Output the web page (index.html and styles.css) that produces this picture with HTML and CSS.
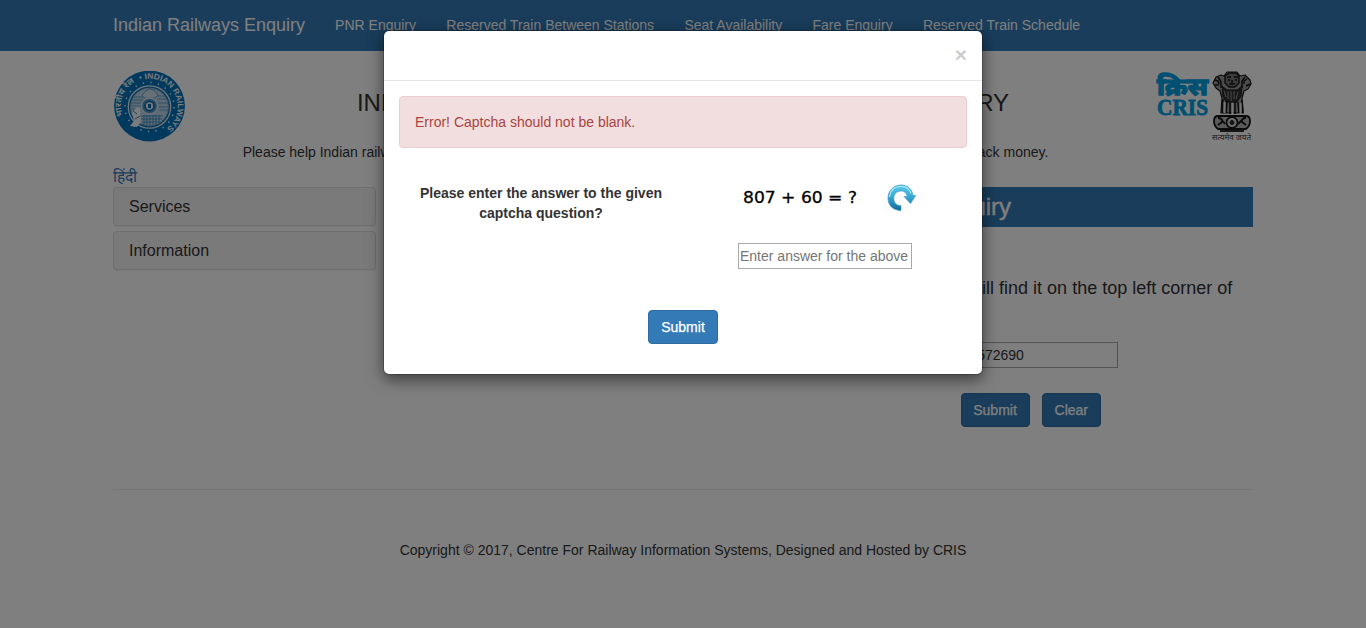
FILE: index.html
```html
<!DOCTYPE html>
<html lang="en">
<head>
<meta charset="utf-8">
<title>Indian Railways Enquiry</title>
<link rel="stylesheet" href="styles.css">
</head>
<body>
<nav class="navbar">
  <div class="container nav-row">
    <a class="brand">Indian Railways Enquiry</a>
    <a class="nav-link">PNR Enquiry</a>
    <a class="nav-link">Reserved Train Between Stations</a>
    <a class="nav-link">Seat Availability</a>
    <a class="nav-link">Fare Enquiry</a>
    <a class="nav-link">Reserved Train Schedule</a>
  </div>
</nav>
<div class="container">
  <header class="masthead">
    <svg class="rail-logo" width="74" height="72" viewBox="0 0 74 72">
      <defs>
        <path id="arc-en" d="M32 8.3A27.6 27.6 0 1 1 36 63"/>
        <path id="arc-hi" d="M10 45A27.500 27.500 0 0 1 32 7.600"/>
      </defs>
      <circle cx="36.500" cy="35" r="35.4" fill="#0072bc"/>
      <circle cx="36.500" cy="36" r="24.6" fill="none" stroke="#dcebf8" stroke-width="1.500" stroke-dasharray="1.500 6.230"/>
      <circle cx="36.500" cy="36" r="21.2" fill="#0c70b5" stroke="#e3edf5" stroke-width="1.300"/>
      <circle cx="36.500" cy="36" r="18.8" fill="#bcd6eb" stroke="#8ab9dd" stroke-width="1"/>
      <path d="M21 26h10M42 25h10M19 29h11M44 28h10M18 32h11M45 32h10M18 35h10M46 36h9M18 38h9M46 39h9" stroke="#5c9fce" stroke-width="1"/>
      <path d="M29 24l4-4 3-2 5 1 4 5-3 3H31z" fill="#cfe1ef" stroke="#4d95c8" stroke-width=".8"/>
      <circle cx="36.500" cy="35" r="8" fill="#5499cb" stroke="#dbe9f4" stroke-width="1.300"/>
      <circle cx="36.500" cy="35" r="4.500" fill="#e8f1f8" stroke="#0669ad" stroke-width="1.600"/>
      <path d="M35 33h3v4h-3z" fill="#0669ad"/>
      <path d="M25 45h25M27 48h22M29 51h18M31 44v10M34 44v11M37 44v11M40 44v11M43 44v10M46 44v7" stroke="#3d8dc4" stroke-width=".9"/>
      <path d="M19 42l5-6 3 1 1 14-4 5-7-1 4-5z" fill="#f3f7fa"/>
      <path d="M20 40l4 3M22 48l5-3" stroke="#3284c0" stroke-width="1"/>
      <text class="seal-text"><textPath href="#arc-en" textLength="74" lengthAdjust="spacingAndGlyphs">INDIAN RAILWAYS</textPath></text>
      <text class="seal-hindi"><textPath href="#arc-hi" textLength="39" lengthAdjust="spacingAndGlyphs">भारतीय रेल</textPath></text>
      <circle cx="27.500" cy="6.500" r="1.2" fill="#dcebf8"/>
    </svg>
    <h1 class="title">INDIAN RAILWAYS PASSENGER RESERVATION ENQUIRY</h1>
    <svg class="cris-logo" width="98" height="72" viewBox="0 0 98 72">
      <text class="cris-hindi" x="2" y="24" textLength="51" lengthAdjust="spacingAndGlyphs">क्रिस</text>
      <text class="cris-text" x="2" y="43.500" textLength="51" lengthAdjust="spacingAndGlyphs">CRIS</text>
      <g stroke="#151515" stroke-linejoin="round">
        <path d="M69 5l3-4h10l3 4 5-1 5 5 1 4-3 5-4 2-2 7 1 15H66l1-15-2-7-4-3-3-5 3-6 5-2z" fill="#999" stroke-width="1.200"/>
        <path d="M70 5l4-3h7l3 3v7l-4 4h-6l-4-4z" fill="#777" stroke-width="1.400"/>
        <path d="M72 6h4m3 0h4M73 9h2m5 0h2m-5 0v3m-3 1h6M60 9l3 1 1 3m-4 1l4 0m28-6l-3 2v3m6 0l-4 2M63 6l3 5v6m24-11l-3 4v7" fill="none" stroke-width="1.500"/>
        <path d="M67 15l5 4h10l5-4-1 10-4 6H71l-3-6z" fill="#333"/>
        <path d="M69 20l2 6m2-6v8m3-8v10m3-10v8m4-7l-2 7" stroke="#aaa" stroke-width=".8" fill="none"/>
        <path d="M68 28l-1 14m5-12l-1 12m4-11v12m5-12v12m3-12l1 11m3-13l1 13" fill="none" stroke-width="1.600"/>
        <path d="M69.500 31v11m8-10v11m8-11v11" stroke="#eee" stroke-width="1.900"/>
        <path d="M63 45h28q4 0 4 5t-4 8H63q-4-3-4-8t4-5z" fill="#b5b5b5" stroke-width="1.800"/>
        <path d="M63 47q5 0 4 4l-4 3m3-6l4 5m21-6q-5 0-4 4l4 3m-3-6l-5 5" fill="none" stroke-width="1.800"/>
        <circle cx="77" cy="51.500" r="5.500" fill="#ddd" stroke-width="1.800"/>
        <circle cx="77" cy="51.500" r="2" fill="#333"/>
        <path d="M65 60h24" stroke-width="1.800"/>
      </g>
      <text class="motto" x="57" y="69" textLength="39" lengthAdjust="spacingAndGlyphs">सत्यमेव जयते</text>
    </svg>
  </header>
  <p class="notice">Please help Indian railways and government of India in moving towards a digitized and cashless economy. Eradicate black money.</p>
  <div class="lang"><a>हिंदी</a></div>
  <div class="columns">
    <aside class="sidebar">
      <div class="panel">Services</div>
      <div class="panel">Information</div>
    </aside>
    <main class="content">
      <h2 class="banner">Passenger Current Status Enquiry</h2>
      <p class="lead">Enter the PNR for your booking below to get the current status. You will find it on the top left corner of the ticket.</p>
      <div class="pnr-row"><input class="field" type="text" value="2458572690"></div>
      <div class="actions"><button class="btn">Submit</button><button class="btn">Clear</button></div>
    </main>
  </div>
  <footer class="footer">Copyright © 2017, Centre For Railway Information Systems, Designed and Hosted by CRIS</footer>
</div>
<div class="backdrop">
  <section class="modal">
    <div class="modal-head"><span class="close">×</span></div>
    <div class="modal-body">
      <div class="alert">Error! Captcha should not be blank.</div>
      <div class="question">
        <label class="prompt">Please enter the answer to the given captcha question?</label>
        <div class="answer">
          <div class="captcha-row">
            <svg class="captcha" width="130" height="30" viewBox="0 0 130 30"><text class="captcha-text" x="5" y="20" textLength="114" lengthAdjust="spacingAndGlyphs">807 + 60 = ?</text></svg>
            <svg class="refresh" width="30" height="30" viewBox="0 0 30 30">
              <defs><linearGradient id="ring" x1="0" y1="0" x2="0" y2="1"><stop offset="0" stop-color="#5ccbea"/><stop offset=".5" stop-color="#33a5cf"/><stop offset="1" stop-color="#17669c"/></linearGradient></defs>
              <path d="M14 26.500C6 26.500 1 21.500 1 14 1 6.500 7 1 14 1 20.500 1 25 5 26 11.500l2.700 0-5.200 8-6.500-7h3.500C19 8.500 17.500 7 14 7 9.500 7 6.800 10 6.800 14.500c0 4.500 3.200 7.300 7.200 7z" fill="url(#ring)" stroke="#3d9dc4" stroke-width=".7"/>
              <path d="M2.500 13C3.500 6 8 2.500 14 2.500c5 0 8.500 2.500 10 7" fill="none" stroke="#b8edfa" stroke-width="1.200"/>
            </svg>
          </div>
          <input class="field" type="text" placeholder="Enter answer for the above">
        </div>
      </div>
      <div class="modal-actions"><button class="btn">Submit</button></div>
    </div>
  </section>
</div>
</body>
</html>
```
FILE: styles.css
```css
* { box-sizing: border-box; }
body { margin: 0; height: 628px; overflow: hidden; background: #fff; color: #333; font: 14px/20px "Liberation Sans", Arial, sans-serif; }
h1, h2, p { margin: 0; font-weight: 400; }
.container { width: 1140px; margin: 0 auto; }
.navbar { height: 51px; background: #337ab7; margin-bottom: 20px; }
.nav-row { display: flex; color: #fff; line-height: 20px; padding-top: 15px; }
.brand { font-size: 18px; margin-right: 30px; }
.nav-link { margin-right: 30.3px; }
.masthead { display: flex; justify-content: space-between; height: 71px; }
.rail-logo { margin-right: 24px; }
.title { font-size: 24px; line-height: 26px; padding-top: 19px; }
.seal-text { font: bold 8px "Liberation Sans", sans-serif; fill: #eef5fb; }
.seal-hindi { font: bold 8.5px "Noto Sans Devanagari", "Noto Sans", sans-serif; fill: #eef5fb; }
.cris-hindi { font: bold 24px "Noto Sans Devanagari", "Noto Sans", sans-serif; fill: #00a0e4; stroke: #00a0e4; stroke-width: 1.4px; }
.cris-text { font: bold 23px "Liberation Serif", serif; fill: #00a0e4; stroke: #00a0e4; stroke-width: .8px; }
.motto { font: 7.5px "Noto Sans Devanagari", "Noto Sans", sans-serif; fill: #333; }
.notice { width: 1065px; text-align: center; white-space: nowrap; }
.lang { height: 25px; padding-top: 5px; font-size: 15.5px; color: #337ab7; }
.columns { display: grid; grid-template-columns: 263px 848px; justify-content: space-between; height: 303px; border-bottom: 1px solid #eee; }
.panel { height: 39px; margin-bottom: 5px; padding: 9px 15px; border: 1px solid #ddd; border-radius: 4px; background: #f5f5f5; font-size: 16px; line-height: 20px; box-shadow: 0 1px 1px rgba(0,0,0,.05); }
.banner { height: 40px; background: #337ab7; color: #fff; text-align: center; font-size: 24px; line-height: 40px; -webkit-text-stroke: .4px #fff; }
.lead { margin-top: 48px; padding: 0 14px 0 16px; font-size: 18px; line-height: 26px; text-align: center; }
.pnr-row { margin-top: 15px; padding-right: 135px; text-align: right; }
.field { display: block; width: 174px; height: 26px; padding: 1px; border: 1px solid #a9a9a9; background: #fff; color: #333; font: inherit; border-radius: 0; }
.field::placeholder { color: #757575; opacity: 1; }
.pnr-row .field { margin-left: auto; }
.actions { display: flex; justify-content: flex-end; gap: 12px; margin: 25px 152px 0 0; }
.btn { height: 34px; padding: 6px 12px; border: 1px solid #2e6da4; border-radius: 4px; background: #337ab7; color: #fff; font: inherit; -webkit-text-stroke: .25px #fff; }
.actions .btn:first-child { width: 69px; padding: 6px 11px; }
.footer { padding-top: 50px; text-align: center; }
.backdrop { position: absolute; inset: 0; background: rgba(0,0,0,.5); }
.modal { width: 600px; height: 345px; margin: 30px auto 0; background: #fff; background-clip: padding-box; border: 1px solid rgba(0,0,0,.2); border-radius: 6px; box-shadow: 0 5px 15px rgba(0,0,0,.5); }
.modal-head { display: flex; justify-content: flex-end; height: 50px; padding: 13px 15px; border-bottom: 1px solid #e5e5e5; }
.close { color: #000; opacity: .2; font-size: 21px; font-weight: 700; line-height: 22px; }
.modal-body { padding: 15px; }
.alert { height: 52px; padding: 15px; border: 1px solid #ebccd1; border-radius: 4px; background: #f2dede; color: #a94442; }
.question { display: grid; grid-template-columns: 284px 284px; margin-top: 35px; }
.prompt { width: 264px; margin-left: 10px; text-align: center; font-weight: 700; }
.answer { padding-left: 55px; }
.captcha-row { display: flex; height: 60px; }
.captcha-text { font: 16.5px "DejaVu Sans", Verdana, sans-serif; fill: #000; stroke: #000; stroke-width: .3px; }
.refresh { margin: 1px 0 0 19px; }
.modal-actions { display: flex; justify-content: center; margin-top: 41px; }
```
